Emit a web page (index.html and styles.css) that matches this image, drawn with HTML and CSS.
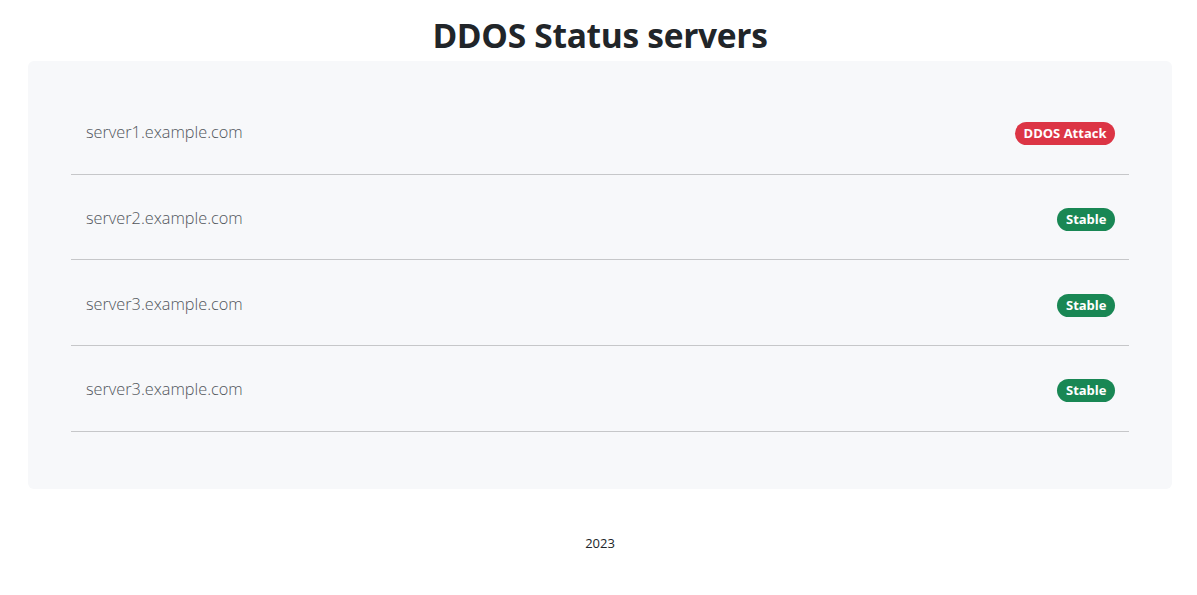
FILE: index.html
```html
<!DOCTYPE html>
<html lang="en">
<head>
<meta charset="utf-8">
<title>DDOS Status servers</title>
<link rel="stylesheet" href="styles.css">
</head>
<body>
<main class="page">
  <h1 class="title">DDOS Status servers</h1>
  <section class="panel">
    <ul class="server-list">
      <li class="server-row"><span class="server-name">server1.example.com</span><span class="badge badge-danger">DDOS Attack</span></li>
      <li class="server-row"><span class="server-name">server2.example.com</span><span class="badge badge-success">Stable</span></li>
      <li class="server-row"><span class="server-name">server3.example.com</span><span class="badge badge-success">Stable</span></li>
      <li class="server-row"><span class="server-name">server3.example.com</span><span class="badge badge-success">Stable</span></li>
    </ul>
  </section>
  <footer class="footer">2023</footer>
</main>
</body>
</html>
```
FILE: styles.css
```css
* { box-sizing: border-box; }
html, body { margin: 0; padding: 0; background: #fff; }
body {
  font-family: "Open Sans", "Noto Sans", sans-serif;
  color: #212529;
  font-size: 16px;
}
.page {
  padding: 0 25px 0 28px;
}
.title {
  margin: 0;
  padding-top: 11px;
  font-size: 33.5px;
  font-weight: 700;
  line-height: 48px;
  text-align: center;
  letter-spacing: -0.3px;
}
.panel {
  margin-top: 2px;
  background: #f7f8fa;
  border-radius: 6px;
  padding: 28px 43px 57px;
}
.server-list {
  list-style: none;
  margin: 0;
  padding: 0;
}
.server-row {
  display: flex;
  align-items: center;
  justify-content: space-between;
  height: 85.67px;
  padding: 2px 14px 0 15px;
  border-bottom: 1px solid #c6c7c9;
}
.server-name {
  font-size: 16.3px;
  font-weight: 300;
  color: #50555a;
}
.badge {
  display: inline-block;
  font-size: 13px;
  font-weight: 700;
  color: #fff;
  line-height: 1;
  padding: 5px 8.5px 5px;
  border-radius: 12px;
  margin-top: 3px;
}
.badge-danger { background: #dc3545; }
.badge-success { background: #198754; }
.footer {
  text-align: center;
  font-size: 13px;
  padding-top: 45px;
}
```
